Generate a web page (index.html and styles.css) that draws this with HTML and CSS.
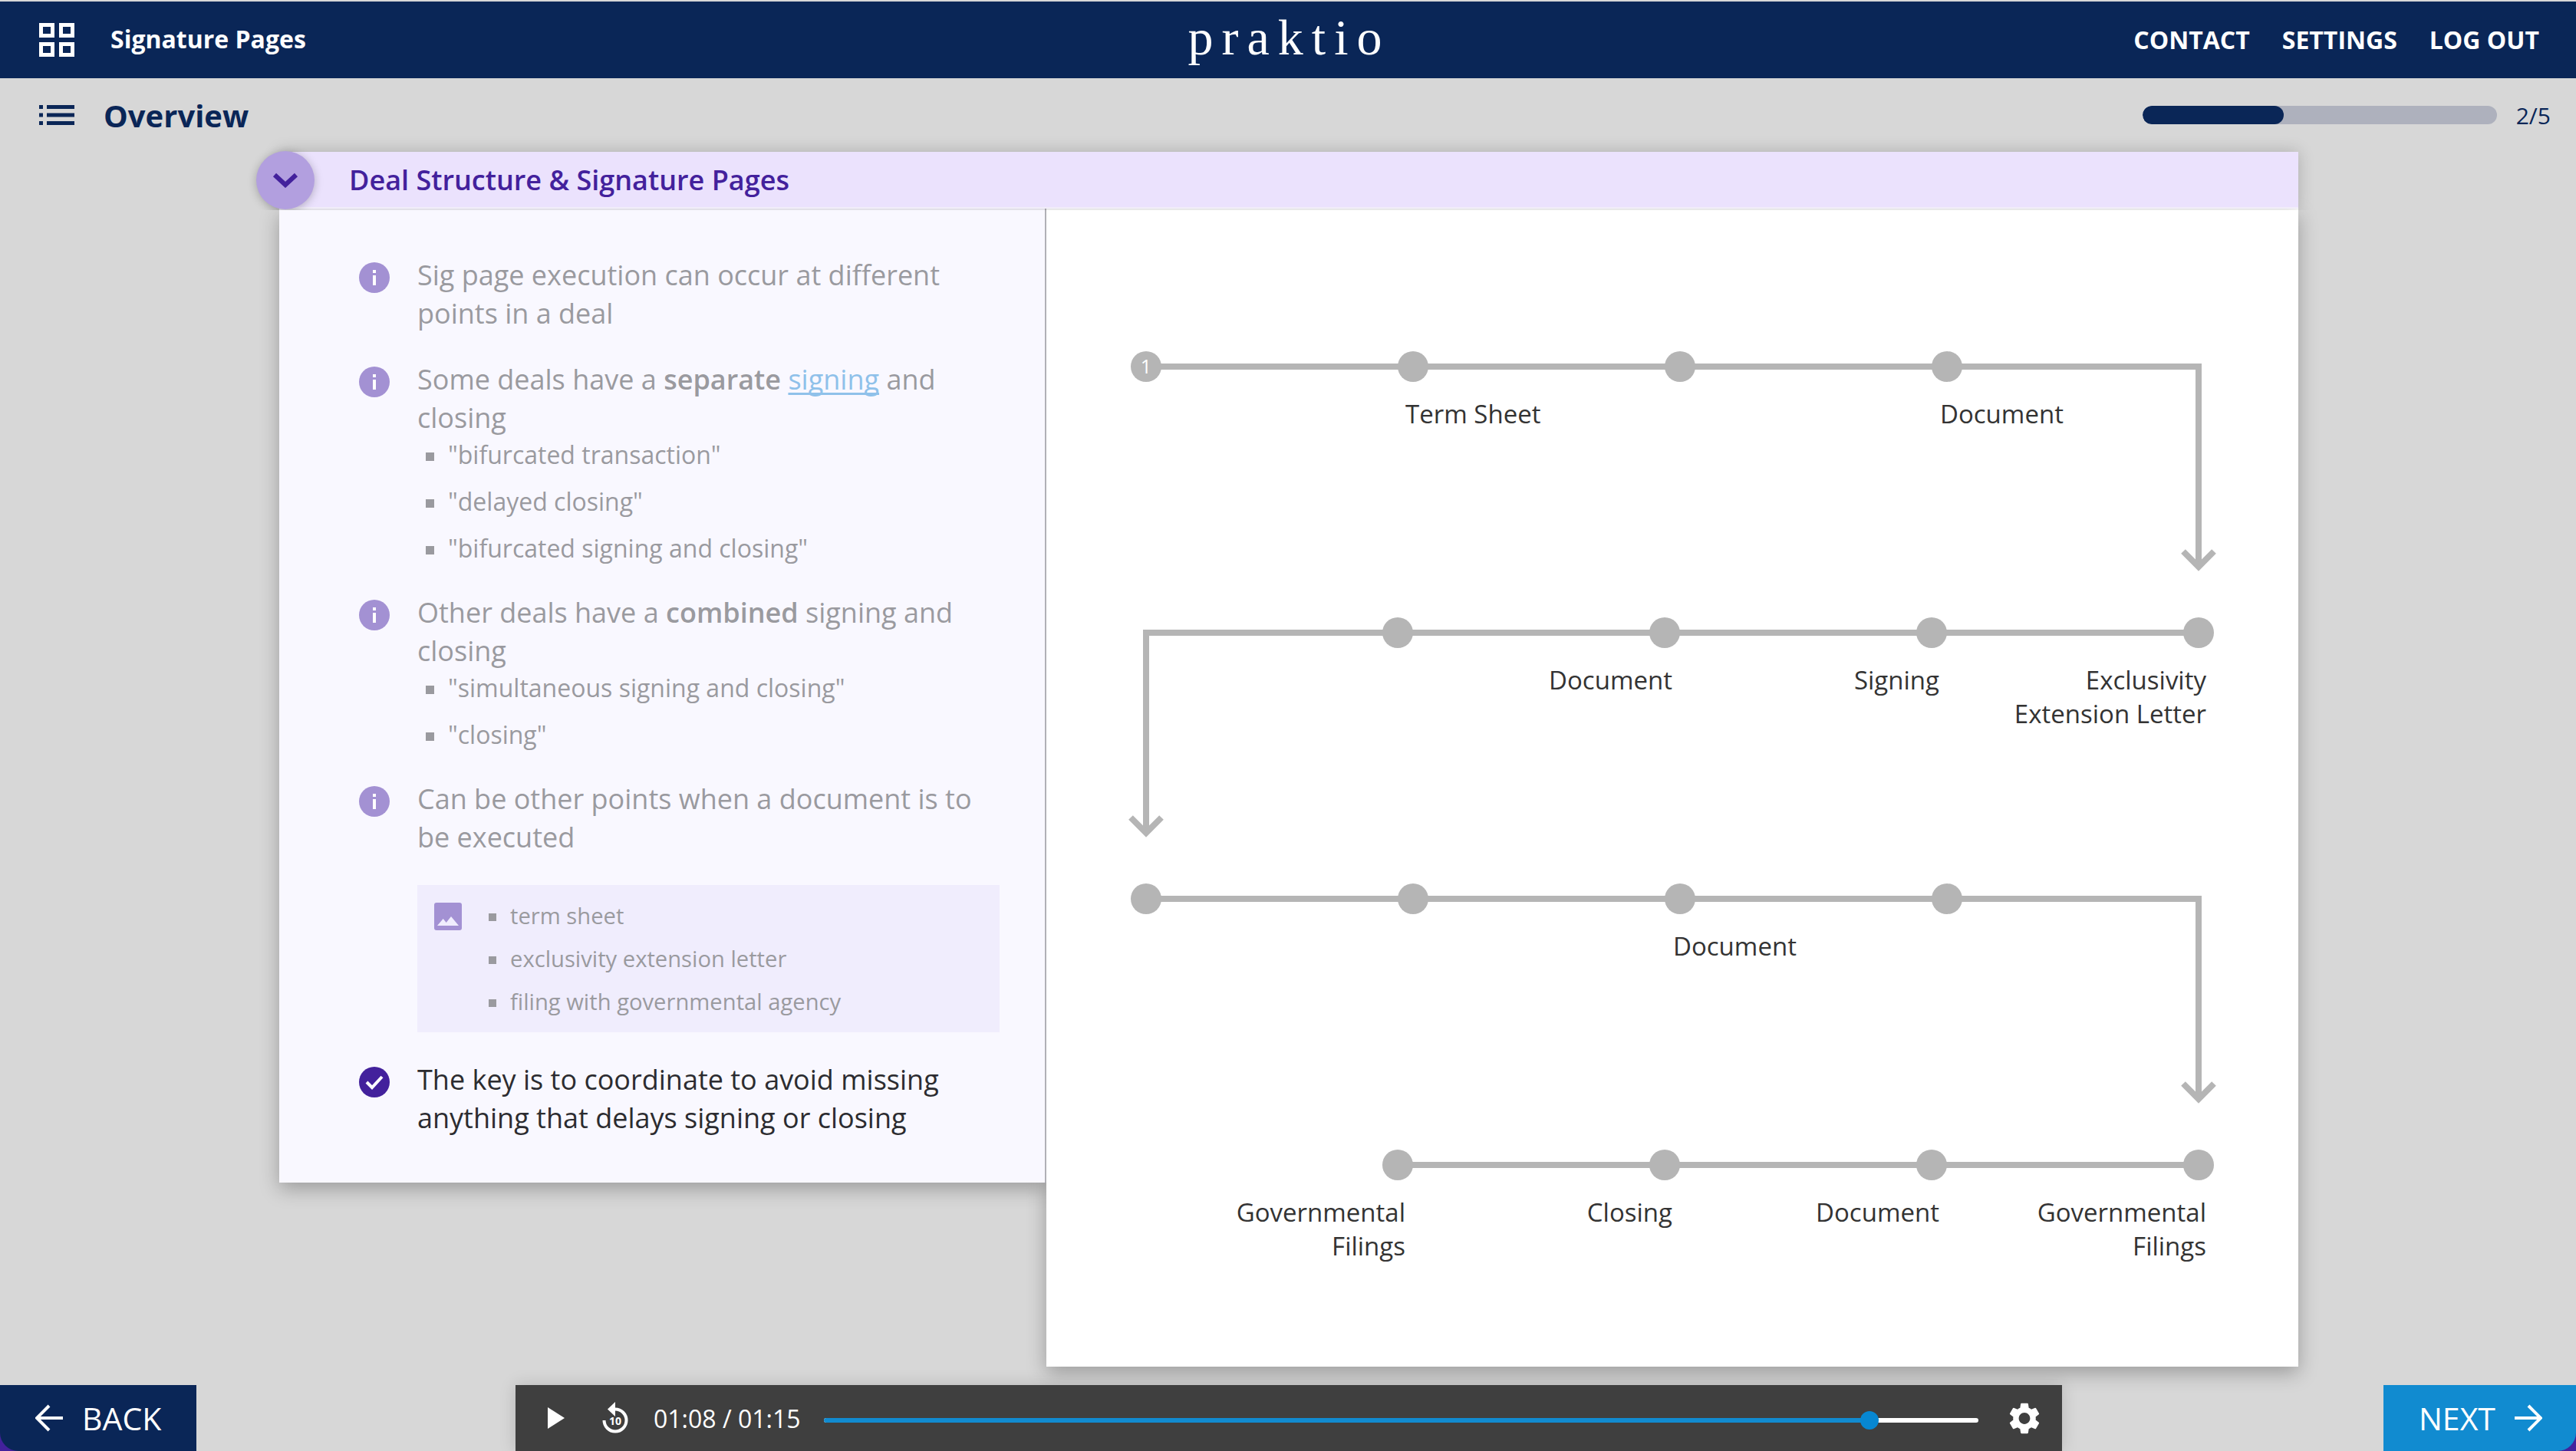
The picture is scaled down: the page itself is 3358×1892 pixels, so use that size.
FILE: index.html
```html
<!DOCTYPE html>
<html lang="en">

<head>
    <meta charset="UTF-8">
    <title>Signature Pages</title>
    <link rel="stylesheet" href="styles.css">
</head>

<body>
    <div class="app">
        <header class="topbar">
            <div class="topbar-left">
                <svg class="grid-icon" viewBox="0 0 46 44" fill="none" stroke="#fff" stroke-width="5">
                    <rect x="2.5" y="2.5" width="15" height="14" />
                    <rect x="28.5" y="2.5" width="15" height="14" />
                    <rect x="2.5" y="27.5" width="15" height="14" />
                    <rect x="28.5" y="27.5" width="15" height="14" />
                </svg>
                <span class="course-title">Signature Pages</span>
            </div>
            <div class="logo">praktio</div>
            <nav class="topnav">
                <a>CONTACT</a>
                <a>SETTINGS</a>
                <a>LOG OUT</a>
            </nav>
        </header>

        <div class="subbar">
            <div class="overview">
                <svg class="list-icon" viewBox="0 0 46 26" fill="#0a2657">
                    <rect x="0" y="0" width="5" height="5" />
                    <rect x="10" y="0" width="36" height="5" />
                    <rect x="0" y="10.5" width="5" height="5" />
                    <rect x="10" y="10.5" width="36" height="5" />
                    <rect x="0" y="21" width="5" height="5" />
                    <rect x="10" y="21" width="36" height="5" />
                </svg>
                <span class="overview-title">Overview</span>
            </div>
            <div class="progress">
                <div class="progress-track">
                    <div class="progress-fill" style="width: 40%"></div>
                </div>
                <span class="progress-text">2/5</span>
            </div>
        </div>

        <main class="stage">
            <section class="panel">
                <div class="panel-head">
                    <div class="toggle">
                        <svg viewBox="0 0 34 20" width="34" height="20" fill="none" stroke="#43219c" stroke-width="6">
                            <path d="M3 3 L17 16 L31 3" />
                        </svg>
                    </div>
                    <h1 class="panel-title">Deal Structure &amp; Signature Pages</h1>
                </div>
                <div class="panel-body">
                    <div class="notes">
                        <div class="note">
                            <svg class="note-icon" viewBox="0 0 40 40">
                                <circle cx="20" cy="20" r="20" fill="#a391d3" />
                                <rect x="18" y="17" width="4" height="13" fill="#fff" />
                                <rect x="18" y="10" width="4" height="4" fill="#fff" />
                            </svg>
                            <div class="note-text">
                                <p>Sig page execution can occur at different points in a deal</p>
                            </div>
                        </div>
                        <div class="note">
                            <svg class="note-icon" viewBox="0 0 40 40">
                                <circle cx="20" cy="20" r="20" fill="#a391d3" />
                                <rect x="18" y="17" width="4" height="13" fill="#fff" />
                                <rect x="18" y="10" width="4" height="4" fill="#fff" />
                            </svg>
                            <div class="note-text">
                                <p>Some deals have a <b>separate</b> <a class="term">signing</a> and closing</p>
                                <ul class="terms">
                                    <li>"bifurcated transaction"</li>
                                    <li>"delayed closing"</li>
                                    <li>"bifurcated signing and closing"</li>
                                </ul>
                            </div>
                        </div>
                        <div class="note">
                            <svg class="note-icon" viewBox="0 0 40 40">
                                <circle cx="20" cy="20" r="20" fill="#a391d3" />
                                <rect x="18" y="17" width="4" height="13" fill="#fff" />
                                <rect x="18" y="10" width="4" height="4" fill="#fff" />
                            </svg>
                            <div class="note-text">
                                <p>Other deals have a <b>combined</b> signing and closing</p>
                                <ul class="terms">
                                    <li>"simultaneous signing and closing"</li>
                                    <li>"closing"</li>
                                </ul>
                            </div>
                        </div>
                        <div class="note note-tight">
                            <svg class="note-icon" viewBox="0 0 40 40">
                                <circle cx="20" cy="20" r="20" fill="#a391d3" />
                                <rect x="18" y="17" width="4" height="13" fill="#fff" />
                                <rect x="18" y="10" width="4" height="4" fill="#fff" />
                            </svg>
                            <div class="note-text">
                                <p>Can be other points when a document is to be executed</p>
                                <div class="callout">
                                    <svg class="callout-icon" viewBox="0 0 36 36">
                                        <rect width="36" height="36" rx="3" fill="#a391d3" />
                                        <path d="M4 30 L11.7 21 L15.7 26 L22 18 L32 30 Z" fill="#f0edfd" />
                                    </svg>
                                    <ul class="callout-list">
                                        <li>term sheet</li>
                                        <li>exclusivity extension letter</li>
                                        <li>filing with governmental agency</li>
                                    </ul>
                                </div>
                            </div>
                        </div>
                        <div class="note note-key">
                            <svg class="note-icon" viewBox="0 0 40 40">
                                <circle cx="20" cy="20" r="20" fill="#43219c" />
                                <path d="M10 20 L17 27 L30 13" fill="none" stroke="#fff" stroke-width="4" />
                            </svg>
                            <div class="note-text">
                                <p>The key is to coordinate to avoid missing anything that delays signing or closing</p>
                            </div>
                        </div>
                    </div>

                    <div class="diagram">
                        <!-- viewBox is in window coordinates, the svg starts at x=1364, y=272 -->
                        <svg class="timeline" viewBox="1364 272 1632 1510" width="1632" height="1510">
                            <g fill="none" stroke="#b5b5b5" stroke-width="8">
                                <path d="M1494 478 H2866 V736" />
                                <path d="M2846 719 L2866 739 L2886 719" />
                                <path d="M2866 825 H1494 V1083" />
                                <path d="M1474 1066 L1494 1086 L1514 1066" />
                                <path d="M1494 1172 H2866 V1430" />
                                <path d="M2846 1413 L2866 1433 L2886 1413" />
                                <path d="M1822 1519 H2866" />
                            </g>
                            <g fill="#b5b5b5">
                                <circle cx="1494" cy="478" r="20" />
                                <circle cx="1842" cy="478" r="20" />
                                <circle cx="2190" cy="478" r="20" />
                                <circle cx="2538" cy="478" r="20" />
                                <circle cx="1822" cy="825" r="20" />
                                <circle cx="2170" cy="825" r="20" />
                                <circle cx="2518" cy="825" r="20" />
                                <circle cx="2866" cy="825" r="20" />
                                <circle cx="1494" cy="1172" r="20" />
                                <circle cx="1842" cy="1172" r="20" />
                                <circle cx="2190" cy="1172" r="20" />
                                <circle cx="2538" cy="1172" r="20" />
                                <circle cx="1822" cy="1519" r="20" />
                                <circle cx="2170" cy="1519" r="20" />
                                <circle cx="2518" cy="1519" r="20" />
                                <circle cx="2866" cy="1519" r="20" />
                            </g>
                            <text class="node-num" x="1494" y="487">1</text>
                            <g class="labels">
                                <text x="1832" y="552">Term Sheet</text>
                                <text x="2529" y="552">Document</text>
                                <text x="2181" y="1246">Document</text>
                            </g>
                            <g class="labels labels-end">
                                <text x="2180" y="899">Document</text>
                                <text x="2528" y="899">Signing</text>
                                <text x="2876" y="899">Exclusivity</text>
                                <text x="2876" y="943">Extension Letter</text>
                                <text x="1832" y="1593">Governmental</text>
                                <text x="1832" y="1637">Filings</text>
                                <text x="2180" y="1593">Closing</text>
                                <text x="2528" y="1593">Document</text>
                                <text x="2876" y="1593">Governmental</text>
                                <text x="2876" y="1637">Filings</text>
                            </g>
                        </svg>
                    </div>
                </div>
            </section>
        </main>

        <footer class="footer">
            <div class="corner">
                <a class="nav-btn back">
                    <svg class="nav-arrow" viewBox="0 0 36 36" fill="none" stroke="#fff" stroke-width="4">
                        <path d="M36 18 H3 M18 2 L2 18 L18 34" />
                    </svg>
                    BACK
                </a>
            </div>

            <div class="player">
                <svg class="play" viewBox="0 0 22 28" fill="#fff">
                    <path d="M0 0 L22 14 L0 28 Z" />
                </svg>
                <svg class="replay" viewBox="0 0 34 42">
                    <path d="M17 9.5 A14.5 14.5 0 1 1 2.5 24" fill="none" stroke="#fff" stroke-width="4" />
                    <path d="M17 0 L7 9.5 L17 19 Z" fill="#fff" />
                    <text class="replay-num" x="17" y="29.5">10</text>
                </svg>
                <span class="time">01:08 / 01:15</span>
                <div class="slider">
                    <div class="slider-fill"></div>
                    <div class="slider-thumb"></div>
                </div>
                <svg class="gear" viewBox="2.4 2 19.2 20" fill="#fff">
                    <path fill-rule="evenodd" d="M19.14 12.94c.04-.3.06-.61.06-.94 0-.32-.02-.64-.07-.94l2.03-1.58c.18-.14.23-.41.12-.61l-1.92-3.32c-.12-.22-.37-.29-.59-.22l-2.39.96c-.5-.38-1.03-.7-1.62-.94l-.36-2.54c-.04-.24-.24-.41-.48-.41h-3.84c-.24 0-.43.17-.47.41l-.36 2.54c-.59.24-1.13.57-1.62.94l-2.39-.96c-.22-.08-.47 0-.59.22L2.74 8.87c-.12.21-.08.47.12.61l2.03 1.58c-.05.3-.09.63-.09.94s.02.64.07.94l-2.03 1.58c-.18.14-.23.41-.12.61l1.92 3.32c.12.22.37.29.59.22l2.39-.96c.5.38 1.03.7 1.62.94l.36 2.54c.05.24.24.41.48.41h3.84c.24 0 .44-.17.47-.41l.36-2.54c.59-.24 1.13-.56 1.62-.94l2.39.96c.22.08.47 0 .59-.22l1.92-3.32c.12-.22.07-.47-.12-.61l-2.01-1.58zM12 15.6c-1.98 0-3.6-1.62-3.6-3.6s1.62-3.6 3.6-3.6 3.6 1.62 3.6 3.6-1.62 3.6-3.6 3.6z" />
                </svg>
            </div>

            <div class="corner">
                <a class="nav-btn next">
                    NEXT
                    <svg class="nav-arrow" viewBox="0 0 36 36" fill="none" stroke="#fff" stroke-width="4">
                        <path d="M0 18 H33 M18 2 L34 18 L18 34" />
                    </svg>
                </a>
            </div>
        </footer>
    </div>
</body>

</html>
```

FILE: styles.css
```css
* {
    box-sizing: border-box;
}

body {
    margin: 0;
    font-family: "Open Sans", sans-serif;
    background-color: #d7d7d7;
    overflow: hidden;
}

.app {
    width: 3358px;
    height: 1892px;
    padding-top: 2px;
    display: flex;
    flex-direction: column;
}

/* top bar */
.topbar {
    height: 100px;
    flex: none;
    background-color: #0a2657;
    color: #fff;
    display: grid;
    grid-template-columns: 1fr auto 1fr;
    align-items: center;
    padding: 0 48px 0 51px;
}

.topbar-left {
    display: flex;
    align-items: center;
    gap: 47px;
}

.grid-icon {
    width: 46px;
    height: 44px;
}

.course-title {
    font-size: 32px;
    font-weight: 700;
    margin-bottom: 4px;
}

.logo {
    font-family: "Liberation Serif", serif;
    font-size: 66px;
    line-height: 70px;
    letter-spacing: 11px;
    margin-bottom: 6px;
}

.topnav {
    display: flex;
    justify-content: flex-end;
    gap: 42px;
    font-size: 32px;
    font-weight: 700;
    margin-bottom: 2px;
}

/* overview row */
.subbar {
    height: 96px;
    flex: none;
    display: flex;
    justify-content: space-between;
    align-items: center;
    padding: 0 33px 0 51px;
    color: #0a2657;
}

.overview {
    display: flex;
    align-items: center;
    gap: 38px;
}

.list-icon {
    width: 46px;
    height: 26px;
}

.overview-title {
    font-size: 40px;
    font-weight: 700;
}

.progress {
    display: flex;
    align-items: center;
    gap: 25px;
}

.progress-track {
    width: 462px;
    height: 24px;
    border-radius: 12px;
    background-color: #aeb1bd;
    overflow: hidden;
}

.progress-fill {
    height: 100%;
    border-radius: 12px;
    background-color: #0a2657;
}

.progress-text {
    font-size: 30px;
}

/* lesson panel */
.stage {
    flex: 1;
    padding-left: 364px;
}

.panel {
    width: 2632px;
}

.panel-head {
    height: 74px;
    background-color: #ebe2fd;
    border-bottom: 2px solid #f1edf9;
    display: flex;
    align-items: center;
    padding-left: 91px;
    position: relative;
    z-index: 2;
    box-shadow: 0 0 20px rgba(0, 0, 0, .2);
    clip-path: inset(-30px -30px -2px -60px);
}

.toggle {
    position: absolute;
    left: -30px;
    top: -1px;
    width: 76px;
    height: 76px;
    border-radius: 50%;
    background-color: #b29fdf;
    display: flex;
    align-items: center;
    justify-content: center;
    box-shadow: 0 2px 12px rgba(0, 0, 0, .25);
}

.panel-title {
    margin: 0;
    font-size: 36px;
    font-weight: 600;
    color: #43219c;
}

.panel-body {
    display: flex;
    align-items: flex-start;
}

.notes {
    width: 1000px;
    height: 1270px;
    flex: none;
    background-color: #f9f8ff;
    border-right: 2px solid #b0b0b6;
    padding: 62px 59px 0 104px;
    box-shadow: 0 8px 24px rgba(0, 0, 0, .28);
    clip-path: inset(-40px 0 -40px -40px);
    position: relative;
}

.note {
    display: flex;
    gap: 36px;
    margin-bottom: 36px;
    font-size: 36px;
    line-height: 50px;
    color: #9a9a9f;
}

.note b {
    font-weight: 600;
}

.note-tight {
    margin-bottom: 37px;
}

.note-key {
    color: #2c2c30;
}

.note-icon {
    width: 40px;
    height: 40px;
    flex: none;
    margin-top: 8px;
}

.note-text {
    flex: 1;
}

.note-text p {
    margin: 0;
}

.term {
    color: #8fc1ea;
    text-decoration: underline;
    text-decoration-thickness: 3px;
    text-decoration-skip-ink: none;
    text-underline-offset: 4px;
}

.terms {
    list-style: none;
    margin: 0;
    padding: 0 0 0 11px;
    font-size: 32px;
    line-height: 46px;
}

.terms li {
    display: flex;
    gap: 18px;
    margin-bottom: 15px;
}

.terms li:last-child {
    margin-bottom: 0;
}

.terms li::before {
    content: "";
    flex: none;
    width: 11px;
    height: 11px;
    margin-top: 20px;
    background-color: #9a9a9f;
}

.callout {
    margin-top: 37px;
    height: 192px;
    background-color: #f0edfd;
    padding: 20px 0 20px 22px;
    display: flex;
    gap: 35px;
}

.callout-icon {
    width: 36px;
    height: 36px;
    flex: none;
    margin-top: 3px;
}

.callout-list {
    list-style: none;
    margin: 0;
    padding: 0;
    font-size: 29.2px;
    line-height: 40px;
}

.callout-list li {
    display: flex;
    gap: 18px;
    margin-bottom: 16px;
}

.callout-list li:last-child {
    margin-bottom: 0;
}

.callout-list li::before {
    content: "";
    flex: none;
    width: 10px;
    height: 10px;
    margin-top: 17px;
    background-color: #9a9a9f;
}

/* right side with the timeline */
.diagram {
    flex: 1;
    height: 1510px;
    background-color: #fff;
    box-shadow: 0 8px 24px rgba(0, 0, 0, .28);
}

.timeline {
    display: block;
}

.labels text {
    font-size: 33px;
    fill: #333;
}

.labels-end text {
    text-anchor: end;
}

.node-num {
    font-size: 25px;
    fill: #fff;
    text-anchor: middle;
}

/* bottom row */
.footer {
    height: 86px;
    flex: none;
    display: flex;
    justify-content: space-between;
}

.corner {
    background-color: #43219c;
}

.nav-btn {
    height: 86px;
    display: flex;
    align-items: center;
    color: #fff;
    font-size: 41px;
}

.back {
    width: 256px;
    padding-left: 46px;
    gap: 25px;
    background-color: #0a2657;
    border-bottom-left-radius: 24px;
}

.next {
    width: 251px;
    padding-left: 46px;
    gap: 25px;
    background-color: #118bd0;
    border-bottom-right-radius: 24px;
}

.nav-arrow {
    width: 36px;
    height: 36px;
}

.player {
    width: 2016px;
    height: 86px;
    margin-right: 3px;
    background-color: #3f3f3f;
    box-shadow: 0 0 20px rgba(0, 0, 0, .15);
    display: flex;
    align-items: center;
    padding-left: 42px;
    color: #fff;
}

.play {
    width: 22px;
    height: 28px;
}

.replay {
    width: 34px;
    height: 42px;
    margin-left: 49px;
}

.replay-num {
    font-size: 14px;
    font-weight: 700;
    fill: #fff;
    text-anchor: middle;
}

.time {
    margin-left: 33px;
    font-size: 32px;
}

.slider {
    width: 1505px;
    height: 6px;
    margin: 6px 0 0 30px;
    border-radius: 3px;
    background-color: #fff;
    position: relative;
}

.slider-fill {
    width: 1363px;
    height: 100%;
    border-radius: 3px;
    background-color: #118bd0;
}

.slider-thumb {
    position: absolute;
    left: 1351px;
    top: -9px;
    width: 24px;
    height: 24px;
    border-radius: 50%;
    background-color: #0787d2;
}

.gear {
    width: 40px;
    height: 41px;
    margin-left: 40px;
}
```
